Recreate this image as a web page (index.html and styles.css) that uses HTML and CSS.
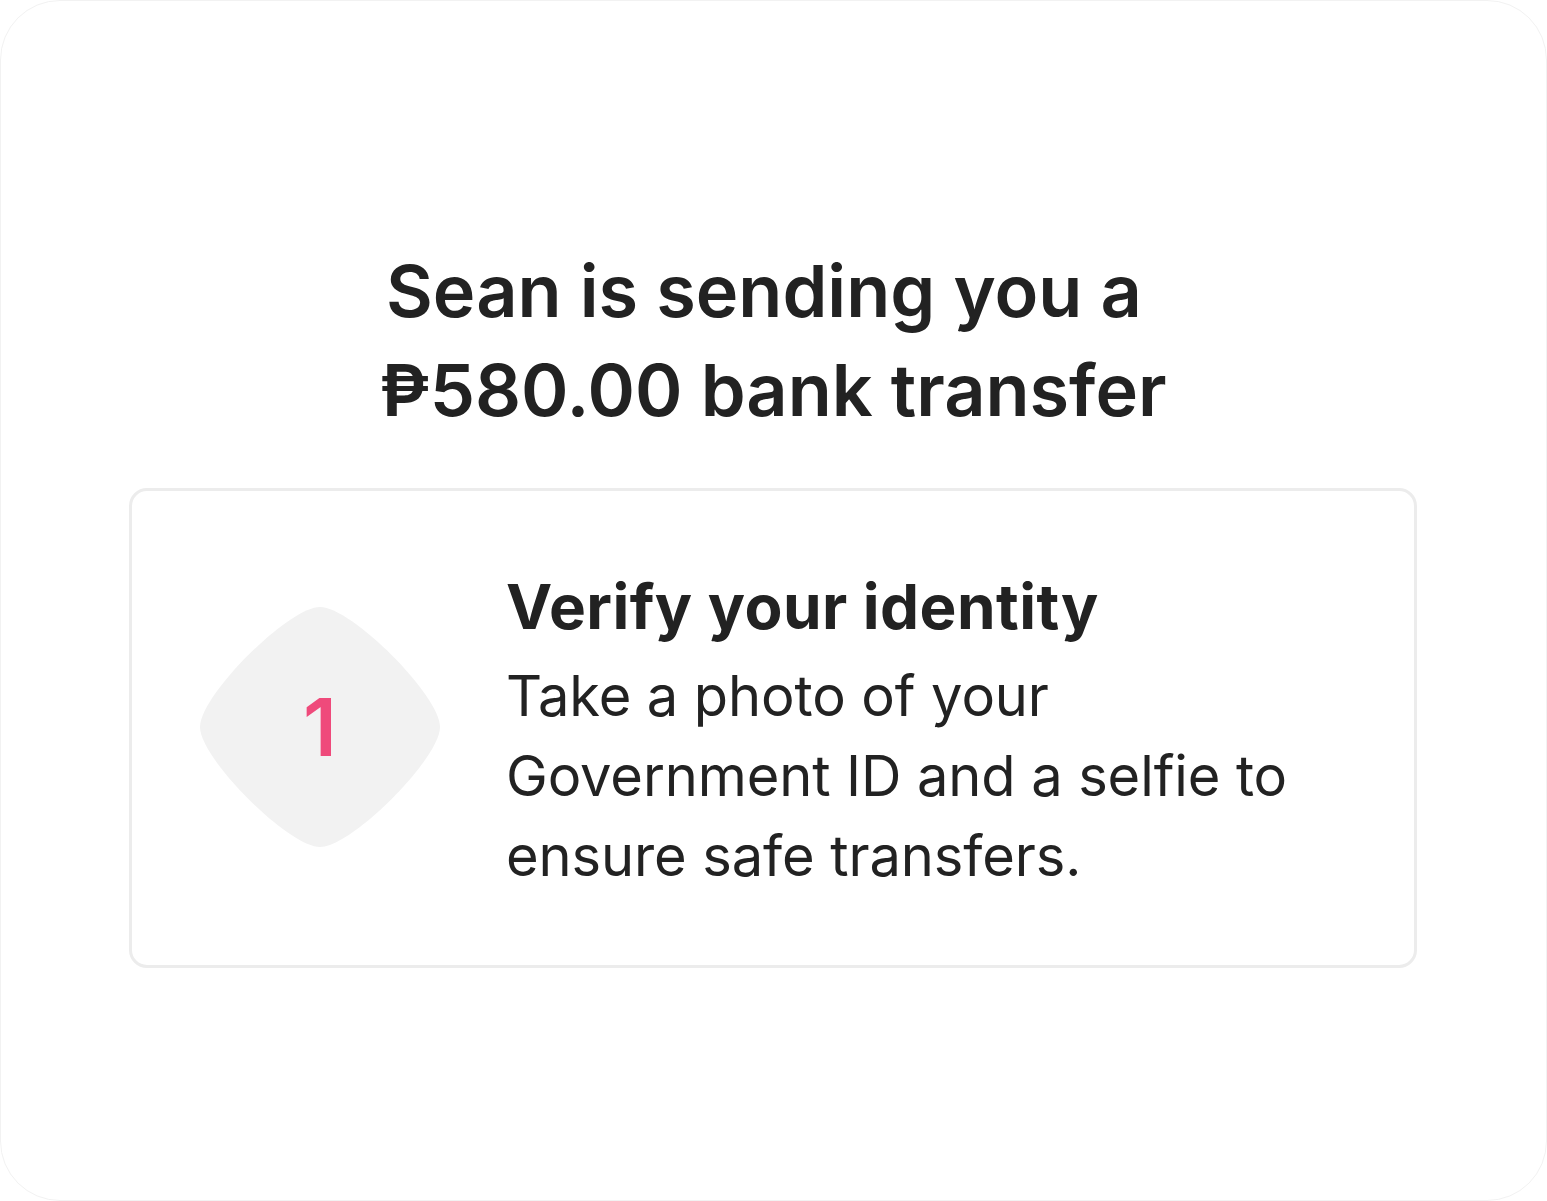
FILE: index.html
```html
<!DOCTYPE html>
<html lang="en">
<head>
    <meta charset="UTF-8">
    <meta name="viewport" content="width=device-width, initial-scale=1.0">
    <title>Bank transfer</title>
    <link rel="stylesheet" href="styles.css">
</head>
<body>

    <div class="frame">
        <h1 class="headline">Sean is sending you a&nbsp;<br>₱580.00 bank transfer</h1>

        <!-- Steps -->
        <div class="step-card">
            <div class="step-badge">
                <svg class="step-blob" viewBox="-120 -120 240 240" width="240" height="240">
                    <path d="M0,-120 C31.5,-120 120,-31.5 120,0 C120,31.5 31.5,120 0,120 C-31.5,120 -120,31.5 -120,0 C-120,-31.5 -31.5,-120 0,-120 Z" fill="#f2f2f2"/>
                </svg>
                <span class="step-num">1</span>
            </div>
            <div class="step-text">
                <h2 class="step-title">Verify your identity</h2>
                <p class="step-desc">Take a photo of your Government ID and a selfie to ensure safe transfers.</p>
            </div>
        </div>
    </div>

</body>
</html>
```

FILE: styles.css
```css
body { margin: 0; font-family: Inter, "Noto Sans", sans-serif; color: #222222; background: #ffffff; }
.frame {
    box-sizing: border-box;
    height: 1201px;
    border: 1px solid #f2f2f2;
    border-radius: 60px;
    padding: 240px 129px 0 128px;
}
.headline {
    margin: 0 0 49px 0;
    text-align: center;
    font-size: 72px;
    line-height: 99px;
    font-weight: 600;
}
.step-card {
    display: flex;
    align-items: flex-start;
    border: 3px solid #ececec;
    border-radius: 18px;
    padding: 76px 0 69px 68px;
    gap: 66px;
}
.step-badge {
    position: relative;
    width: 240px;
    height: 240px;
    margin-top: 40px;
    flex: none;
    display: flex;
    align-items: center;
    justify-content: center;
}
.step-blob { position: absolute; left: 0; top: 0; }
.step-num {
    position: relative;
    font-size: 80px;
    font-weight: 600;
    color: #ef4a7b;
    line-height: 1;
}
.step-text { width: 830px; }
.step-title {
    margin: 0 0 9px 0;
    font-size: 62px;
    line-height: 80px;
    font-weight: 700;
    letter-spacing: 0.45px;
}
.step-desc {
    margin: 0;
    font-size: 56px;
    line-height: 80px;
    font-weight: 400;
    letter-spacing: -0.1px;
}
```
